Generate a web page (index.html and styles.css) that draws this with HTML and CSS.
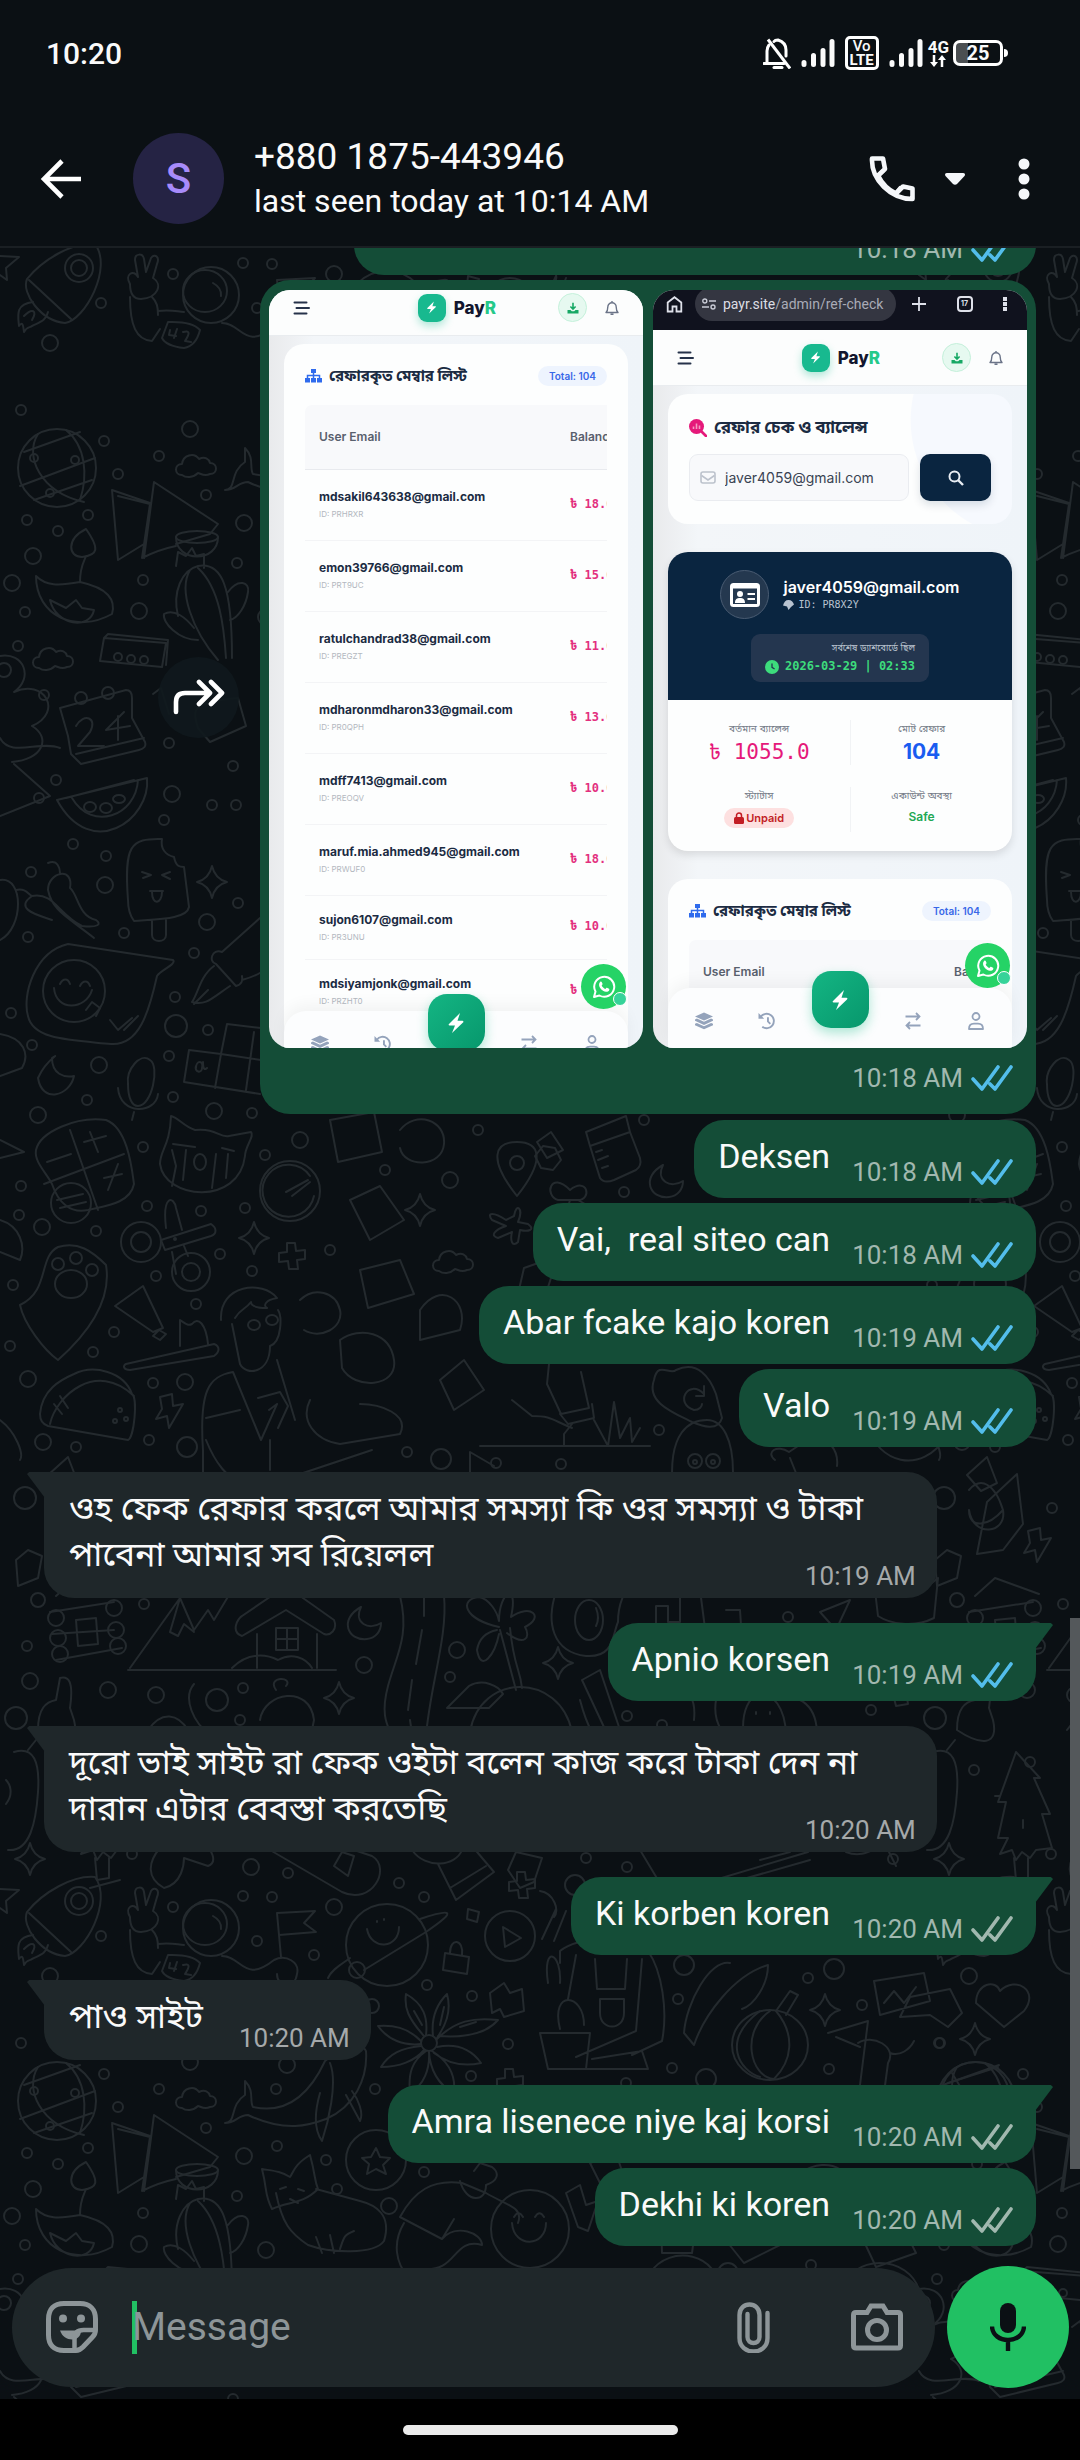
FILE: index.html
```html
<!DOCTYPE html>
<html lang="en">
<head>
  <meta charset="UTF-8">
  <meta name="viewport" content="width=device-width, initial-scale=1">
  <title>+880 1875-443946</title>
  <link rel="stylesheet" href="styles.css">
</head>
<body>

  <!-- shared icons -->
  <svg class="defs" aria-hidden="true">
    <symbol id="ticks" viewBox="0 0 42 28"><path d="M2 15l9 10L27 3M19 20l5 5L40 3" fill="none" stroke="currentColor" stroke-width="3.6" stroke-linecap="round" stroke-linejoin="round"/></symbol>
    <symbol id="bars" viewBox="0 0 34 28"><path d="M3 25.500v-2M12.500 25.500v-9M22 25.500v-14M31 25.500v-23" stroke="currentColor" stroke-width="5" stroke-linecap="round"/></symbol>
    <symbol id="bolt" viewBox="0 0 18 22"><path d="M13 1L2 12c-.7.700-.3 1.500.6 1.500H8l-3 7.500L16 10.500c.8-.8.4-1.700-.6-1.700H10.500z" fill="#fff"/></symbol>
    <symbol id="menu" viewBox="0 0 17 14"><path d="M1.500 1.500h12M3.500 7h12.500M1.500 12.500h12" stroke="#26324a" stroke-width="2" stroke-linecap="round"/></symbol>
    <symbol id="download" viewBox="0 0 12 12"><path d="M6 .8v6M3.400 4.500L6 7.200l2.600-2.700" fill="none" stroke="#16a864" stroke-width="1.600"/><path d="M.5 8h3l1.300 1.300h2.400L8.500 8h3v3.500H.5z" fill="#16a864"/></symbol>
    <symbol id="bell" viewBox="0 0 14 16"><path d="M7 1v1M1 12.500c1.600-1.500 1.800-3 1.800-5.500a4.200 4.200 0 0 1 8.400 0c0 2.500.2 4 1.800 5.500zM5.500 14.300h3" fill="none" stroke="#6b7488" stroke-width="1.400" stroke-linejoin="round"/></symbol>
    <symbol id="tree" viewBox="0 0 17 14"><path d="M6 0h5v4H6zM0 9h5v4.500H0zM6 9h5v4.500H6zM12 9h5v4.500h-5z" fill="#2f6bed"/><path d="M8.500 3v6M2.500 9V6.500h12V9" fill="none" stroke="#2f6bed" stroke-width="1.500"/></symbol>
    <symbol id="layers" viewBox="0 0 19 18"><path d="M9.500 0L19 4.200 9.500 8.500 0 4.200zM0 7.300l2-.9 7.500 3.400L17 6.400l2 .9v1.500l-9.500 4.300L0 8.800zM0 12l2-.9 7.500 3.400 7.500-3.400 2 .9v1.500l-9.500 4.300L0 13.500z" fill="#94a3bb"/></symbol>
    <symbol id="history" viewBox="0 0 19 18"><path d="M3 4.500A7.600 7.600 0 1 1 4.500 15M10.500 5v4.500l2.500 2.500" fill="none" stroke="#94a3bb" stroke-width="2"/><path d="M.5.500v6h6z" fill="#94a3bb"/></symbol>
    <symbol id="swap" viewBox="0 0 17 18"><path d="M1 4.500h14M11.500 1L15 4.500 11.500 8M16 13.500H2M5.500 10L2 13.500 5.500 17" fill="none" stroke="#94a3bb" stroke-width="1.800"/></symbol>
    <symbol id="user" viewBox="0 0 16 18"><circle cx="8" cy="4.500" r="3.500" fill="none" stroke="#94a3bb" stroke-width="1.800"/><path d="M1 17c0-3.500 2-5.300 5-5.300h4c3 0 5 1.800 5 5.300z" fill="none" stroke="#94a3bb" stroke-width="1.800" stroke-linejoin="round"/></symbol>
    <symbol id="whatsapp" viewBox="0 0 24 24"><path d="M2 22l1.500-5.400A10 10 0 1 1 7.400 20.500z" fill="none" stroke="#fff" stroke-width="2" stroke-linejoin="round"/><path d="M8.300 6.800c.5-.5 1.100-.4 1.400.2l.8 1.800c.2.400 0 .8-.8 1.700.8 1.700 2 2.800 3.700 3.500.9-1.100 1.100-1.400 1.600-1.200l2 1c.5.200.4.900.1 1.600-.5 1-2 1.500-3.200 1.300-3.400-.7-6.300-3.500-6.800-6.300-.2-1.400.4-2.800 1.200-3.600z" fill="#fff"/></symbol>
  </svg>

  <header class="top">
    <div class="status">
      <span class="clock">10:20</span>
      <div class="status-icons">
        <svg class="mute" viewBox="0 0 28 31"><path d="M1 25.500h20M4 25V13c0-2 .5-4 2-6M11 3.500c1-1.500 2-1.500 4-1.500 5 1.500 8 5 8 10v6" fill="none" stroke="#fff" stroke-width="3" stroke-linecap="round"/><path d="M5 1.500l22 29" stroke="#fff" stroke-width="3"/><path d="M11 29.500h8" stroke="#fff" stroke-width="3" stroke-linecap="round"/></svg>
        <svg class="bars"><use href="#bars"/></svg>
        <span class="volte"><span class="vo">Vo</span><span>LTE</span></span>
        <svg class="bars"><use href="#bars"/></svg>
        <span class="net">4G
          <svg viewBox="0 0 16 12"><path d="M4 0v9M12 12V3" stroke="#fff" stroke-width="2.500"/><path d="M0 7h8l-4 5zM8 5h8l-4-5z" fill="#fff"/></svg>
        </span>
        <span class="battery">25</span>
      </div>
    </div>
    <div class="contact">
      <button class="icon-btn back" aria-label="Back"><svg viewBox="0 0 42 40"><path d="M22 2L4 20l18 18M4 20h37" fill="none" stroke="#fff" stroke-width="4.600"/></svg></button>
      <span class="avatar">S</span>
      <div class="who">
        <h1>+880 1875-443946</h1>
        <p>last seen today at 10:14 AM</p>
      </div>
      <button class="icon-btn call" aria-label="Call">
        <svg class="phone" viewBox="0 0 46 46"><path d="M3 2.500h11l2 10.500-7 6.500c4.500 9 9.500 14 18 18l7-7 9.500 2V43C22 43 2 24 3 2.500z" fill="none" stroke="#f5f7fa" stroke-width="4.600" stroke-linejoin="round"/><path d="M9 20l6-6M27 37l5-6" stroke="#f5f7fa" stroke-width="4"/></svg>
        <svg class="caret" viewBox="0 0 22 14"><path d="M3 1h16c2 0 2.500 1.500 1.500 3l-7.500 8c-1 1-3 1-4 0L1.500 4C.5 2.500 1 1 3 1z" fill="#f5f7fa"/></svg>
      </button>
      <button class="icon-btn more" aria-label="More options"><svg viewBox="0 0 12 42"><circle cx="6" cy="6" r="5.500" fill="#f5f7fa"/><circle cx="6" cy="21" r="5.500" fill="#f5f7fa"/><circle cx="6" cy="36" r="5.500" fill="#f5f7fa"/></svg></button>
    </div>
  </header>

  <div class="screen">

    <!-- doodle wallpaper, one 919x1633 tile repeated -->
    <svg class="wallpaper" aria-hidden="true">
      <defs>
        <path id="spark" d="M0-16Q3-3 15 0 3 3 0 16-3 3-15 0-3-3 0-16z"/>
        <path id="cloud" d="M-13 9c-8 0-8-11 0-11 1-9 12-12 17-5 6-3 10 0 11 4 8 0 8 11 0 11-6 3-10-1-12-1-5 5-12 5-16 2z"/>
        <path id="moon" d="M-4-16c-22 12-14 34 6 32 9-1 14-8 14-16C4 8-12 0-4-16z"/>
        <path id="cross" d="M-5-14h8l1 8 9-1v9l-8 1 1 9h-9l-1-8-9 1v-9l8-1z"/>
        <path id="zap" d="M-9-13l12-3 1 12 10-2L0 18-2 6l-11 3 6-10z"/>
        <g id="tile">
          <!-- space -->
          <path d="M95 244c-22-2-52 15-68 35-6 14 14 42 38 44 20-3 48-55 30-79zM29 280l42 39"/><circle cx="79" cy="268" r="14"/><circle cx="79" cy="268" r="8"/>
          <path d="M33 302c-18 2-15 14-14 24 3-4 4-3 5 6 3-6 6-4 8-6 8-4 14-5 16-14M24 316c8-8 14-6 8 4"/>
          <path d="M130 284c-6-10 4-15 8-7l-3-17c0-7 8-7 9-1l2 13 5-14c4-5 9-1 6 6l-4 14c10 6 5 20-12 21-7 0-11-4-11-15zM130 297c0 28 6 43 22 44l8-12M152 297c5 5 6 10 6 18M158 311c14-2 20 1 26 1"/>
          <circle cx="211" cy="295" r="28"/><ellipse cx="205" cy="291" rx="22" ry="21"/><path d="M213 283q9 5 8 13"/>
          <path d="M168 322q24-1 32 8-4 16-16 18-18-2-22-10zM170 330l-1 5 7 1M177 329l-3 9M183 332q10-3 2 9l6 1M222 323c20 0 22 28 52 4 12-6 26 2 23 14-2 16-20 14-20 0"/>
          <path d="M277 280l38-2-11 12 12 9-37 3M277 280l4 44"/>
          <circle cx="387" cy="312" r="41"/><path d="M420 286c30-10 40-10 6 13L364 337M328 345c4-9 14-14 22-20"/><circle cx="357" cy="337" r="8"/><path d="M367 296c4 22 32 20 32-2M377 288v1M384 286v1"/>
          <path d="M445 320l24 4-2 17-24-4zM450 320c0-16 14-14 12 2"/><circle cx="510" cy="303" r="25"/><path d="M503 294l2 20 16-9zM468 276l11 3-2 10-10-3z"/>
          <path d="M0 256l19 1-13 11 1 12-7-5M540 258c14 2 20 20 14 26M556 276l-14 30M566 278l-12 30"/>
          <!-- plants and animals -->
          <circle cx="429" cy="410" r="8"/><path d="M424 403c-16-18-20-28-18-42 18 10 22 24 20 41M433 403c-2-18 4-32 14-42 5 18-2 32-10 44M437 406c18-18 36-22 61-19-12 14-34 18-60 16M437 414c20-4 34 2 44 16-18 4-34 0-47-10M432 418c16 10 24 24 22 42-16-8-24-24-25-41M426 418c-14 10-18 22-16 42 14-8 20-24 19-41M421 413c-20 2-32 8-40 21 18 0 34-6 43-17M421 408c-14-14-28-16-43-15 10 14 26 20 43 18M414 378l8 14M444 374l-4 18M460 394l16-5"/>
          <circle cx="57" cy="468" r="39"/><path d="M24 452l56-20M20 486l75-28M34 500l58-20M38 434c-14 22 2 58 46 68M66 430c20 16 22 46 14 70"/><circle cx="34" cy="458" r="4"/><circle cx="75" cy="460" r="4"/><circle cx="50" cy="493" r="4"/>
          <use href="#cloud" x="195" y="466"/>
          <path d="M225 490c12 0 4-18 20-28v-14c10 10 4 20 8 26 36 8 58-16 72-46 14-12 38-18 41-10 2 28-12 56-40 68-16 6-40 14-78-4-10 0-12 8-23 8zM330 430c8 20-2 60-8 78-10-14-6-34-2-48M346 462l14 26c4-8-2-22-8-30"/>
          <path d="M112 490l38 13M112 490l6 70 26-16M118 496l32 8-8 54c12-6 24-10 34-12M154 482l64 42-8 10-34 10M154 482l-10 76"/><ellipse cx="197" cy="537" rx="21" ry="6"/><path d="M176 537c0 26 42 26 42 0"/>
          <circle cx="376" cy="527" r="30"/><path d="M376 515l4 9 10 1-7 7 3 9-10-5-9 5 2-10-7-6 9-1z"/>
          <path d="M262 536c6 24 2 24 10 40 16-8 30-4 46-20-4-10-2-12-8-34-16 10-16 16-20 22-10-6-16-6-28-8zM276 560c6 30 14 40 32 52 22 8 66 10 76-4 8-26-8-36-24-40l-44-12M316 604l6 16M330 602l4 18M340 616c4-12 4-14 14-18M280 556l6-2M298 556l6 2M290 566l8 4"/>
          <path d="M36 576c0 40 40 58 76 38 4-14-4-26-32-32-22 4-34 4-44-6zM82 557c-14 0-16-18 4-28 14 20 12 26-4 28zM80 582c0-16 4-20 6-26M50 600c6 26 40 30 44 10l-12-2-6-8-10 8z"/>
          <path d="M178 616c-6-24 4-46 20-50 24-4 34 20 34 92M190 570c-12 20 2 60 28 90M198 568c22 20 26 60 28 90M176 566l2-14 8 4 6-8 4 8 8-2v14M228 592c10-14 22-10 20 0-2 14-10 26-18 28M198 640c-20 0-36-18-34-26 10-6 22 4 30 14"/>
          <path d="M400 584c14-26 32-38 62-34l24 10c20 12 38 14 32 30M400 584l42 22 12-20M404 590c-12 20-8 40 4 54M442 606c14-16 40-6 40 6-30-8-24 28-60 24"/><circle cx="530" cy="596" r="39"/><path d="M512 590c2 26 34 24 34 0M514 584c3-5 6-5 9 0M535 584c3-5 6-5 9 0M460 548c6 22 26 22 26 4 12-4 14-12 6-18l-12-4-6 8"/>
          <path d="M104 638l62 5-4 24-62-6zM104 638l4-4 60 6-2 25"/><circle cx="118" cy="657" r="4"/><circle cx="131" cy="659" r="4"/><circle cx="144" cy="660" r="4"/><use href="#cloud" x="52" y="659"/>
          <path d="M153 694l8-6 8 26M198 728c-6-20-6-26 40-30l8 28-36 16z"/>
          <path d="M60 708l66-18q6 0 6 8v20l13 24q2 6-6 8l-58 14-10-10-3-18zM76 754l68-16"/><circle cx="81" cy="698" r="6"/><circle cx="108" cy="693" r="6"/><path d="M76 726c8-14 22-8 14 6l-12 14h26M124 712l-18 18 24-4M118 716v24"/>
          <path d="M57 800l90-22c4 42-56 84-90 22zM66 798l68-18M138 780c-2 36-46 52-66 18"/><ellipse cx="90" cy="807" rx="6" ry="5"/><ellipse cx="106" cy="808" rx="6" ry="5"/><ellipse cx="119" cy="799" rx="6" ry="4"/>
          <path d="M128 900c-4-54 2-62 34-61-2 10 4 16 12 18 2 10 6 10 10 10l5 40c-2 12-30 12-55 14q-6-8-6-21zM152 921v14c0 8 14 8 14 0v-15M142 872l9 3-8 3M170 872l-8 3 8 4M150 891h13M152 892c0 14 10 12 10 0"/>
          <path d="M16 890c10-2 12 4 16 6 22-4 26 18 50 30 16 2 20-2 14-6-18-4-18-26-26-32 4-22-22-16-22 2 4 20 18 26 46 48M48 863c10-4 12 6 12 10M32 896c-20 14 10 20 20 24"/>
          <use href="#spark" x="212" y="882"/>
          <path d="M28 1016c-6-20 6-64 40-72l105 16c4 4-12 10-16 16-8 36-18 70-46 68-40-4-78-4-83-28z"/><ellipse cx="74" cy="991" rx="31" ry="31"/><path d="M54 988c2 24 32 22 38 2M60 984c3-6 8-6 10 0M80 986c3-6 8-6 10 0M86 1010l6-8 8 6-4 8M110 1020l8 10 14-12M124 1030l14-14"/>
          <path d="M222 952l38-34c14-4 20 20 14 40-8 14-18 18-32 22M222 952c-10-4-14 10-6 12l20 22c8-2 6-8 6-10M214 966c-14 10-16 28-22 36 14 4 20-4 38-16M194 1004l14-14"/>
          <path d="M38 1078c8-18 24-26 14-20 0 16 12 20 22 18-4 20-32 28-36 2zM128 1084c-2-14 12-32 22-24 10 6 2 46-12 46-6 0-10-8-10-22zM118 1088c2 28 38 26 40 6M134 1112l-2 8"/>
          <path d="M184 1082l5-32 32 4 6-30 34 4M221 1054l-6 34M184 1082l76 12M221 1054l40 6M254 1032l-8 58M196 1068c0-8 8-8 6 0 0 6-8 4-6-2M203 1062c0 8 2 8 4 6"/>
          <path d="M36 1150c4-18 40-34 70-30 22 8 26 50 28 64-4 20-30 22-46 26-18 4-30-8-36-26-6-12-18-22-16-34zM70 1130l28 80M44 1184l80-30M47 1162l24-8M84 1142l22-6M90 1132l8 20M104 1178l18-4M108 1190l10-26"/><ellipse cx="71" cy="1203" rx="20" ry="20"/><path d="M57 1200l26-6M60 1208l26-6"/>
          <path d="M160 1164c0-14 10-18 11-48 8 2 12 10 24 14 22-2 24 8 34 6l22-4c4 4-6 14-6 24-6 50-80 44-85 8zM173 1144l22 3M172 1150l4 16-4 20M186 1150l-3 30M222 1148l12 3M216 1154l-4 34M228 1154l-2 24"/><ellipse cx="200" cy="1162" rx="6" ry="8"/>
          <circle cx="141" cy="1242" r="20"/><circle cx="141" cy="1242" r="10"/><circle cx="191" cy="1272" r="19"/><circle cx="191" cy="1272" r="9"/><path d="M161 1240l50-16c6 4 6 10 0 12l-46 14zM166 1228c-4-34 8-32 10-20l6 22M172 1252l4 22M184 1246l4 10"/><circle cx="175" cy="1239" r="1"/>
          <path d="M20 1305c30-14 18-48 38-58 20-6 34 4 48 18 6 36-20 70-48 95-14-10-34-36-38-55z"/><ellipse cx="71" cy="1284" rx="16" ry="14"/><circle cx="58" cy="1264" r="6"/><circle cx="76" cy="1258" r="6"/><circle cx="92" cy="1270" r="6"/>
          <path d="M115 1306l28-20 20 42-10 4zM153 1336l6-6 7 4-6 6zM126 1364l88-20c6 2 6 8 0 12l-84 14c-6 0-8-4-4-6zM180 1346v-26c6 4 8 6 12 4 6-8 14 0 16 20"/>
          <path d="M221 1320c-2-36 42-40 56-22-12 2-14 8-10 10-10 0-16-2-16-6-6 8-10 6-16 16M232 1324l8 40c6 12 30 10 30-18 12-4 12-30 8-36"/><ellipse cx="254" cy="1325" rx="6" ry="5"/><ellipse cx="272" cy="1320" rx="6" ry="5"/><path d="M203 1450c-4-60 6-74 30-78l28 68 16-36-8 6M206 1418l34-8M277 1360l18 60M203 1450v30M270 1440v30M258 1398l22-6 8 14-10 22"/>
          <path d="M40 1414c2-24 20-34 34-40 20-10 50-2 58 20 6 4 2 44-4 46l-80-14c-6-2-8-6-8-12zM50 1424c6-28 46-64 84-28M54 1404l8 10M60 1396l8 12"/><use href="#zap" x="169" y="1410"/><circle cx="120" cy="1410" r="2"/><circle cx="126" cy="1419" r="2"/><circle cx="115" cy="1421" r="2"/>
          <circle cx="290" cy="1191" r="30"/><path d="M310 1176a26 26 0 1 0 4 20M286 1192l22-12M292 1196l18-14"/><use href="#spark" x="254" y="1238"/><use href="#cross" x="292" y="1257"/>
          <!-- middle, around the short messages -->
          <path d="M330 1120l44-8 8 40-44 10zM400 1130c16-20 46-10 44 14s-40 24-44 4M300 1300c14-14 36-8 40 10s-20 30-36 20M350 1200l30-14 24 34-34 20z"/><use href="#spark" x="420" y="1210"/><use href="#cloud" x="452" y="1262"/>
          <path d="M517 1196c-30-38-22-54 0-54s30 16 0 54z"/><circle cx="517" cy="1163" r="7"/>
          <path d="M586 1132l40-16 4 16-40 14zM590 1146l10 32q4 6 14 2l22-10q6-4 4-12l-10-26M596 1152l6-2M598 1160l10-4M602 1168l6-2"/>
          <use href="#moon" x="667" y="1181"/><path d="M563 1150l-12-18-14 10 10 16zM535 1156l8-10 12 2 6 12-8 10-12-2z"/>
          <path d="M570 1190c-20-20-26 6-12 10h20c14 0 10-24-8-10zM570 1200l-4 14M578 1200l14 8v18"/>
          <path d="M514 1216c2-14 10-8 4 6l10 2c8 6 0 8-8 6l-2 12c-6 6-8-2-6-10l-14 6c-8-2-4-8 8-12l-14-6c-6-8 2-8 14 0z"/>
          <path d="M524 1268l-6 26 24 12 16-50zM360 1270l40-10 14 34-46 14zM420 1310c20-30 50-10 40 20l-40 10zM340 1340c20-14 50-8 54 20s-40 30-52 8zM310 1400c-10 20 4 40 30 44l60-10c10-20-20-30-40-30M440 1380l24-20 20 30-30 20z"/>
          <path d="M654 1380c4-20 16-4 22-10 22-10 34 8 40 24l6 24c-4 14-20 8-30 4-20-10-46-20-38-42z"/><path d="M704 1394c-16-16-30 10-10 16 6 0 8-4 8-6M704 1386v10h-8"/>
          <path d="M549 1364l-2 20 14 30 28-6-8-36M560 1414l8 10 26-6-2-14M572 1424l-8 10v12M594 1420l14 26 6-44 6 36 10-20 2 24 8-14M480 1446h170M512 1400l20 16c20 0 20 4 40 12"/>
          <path d="M673 1490c-6-60 18-70 34-70s26 20 26 52"/><circle cx="695" cy="1461" r="7"/><circle cx="713" cy="1461" r="7"/><circle cx="695" cy="1462" r="2"/><circle cx="713" cy="1462" r="2"/>
          <path d="M775 1460c-10-8 2-16 14-8l24-16c14 0 26 14 24 30M790 1458l8 20M870 1430c6 28 50 50 78 4M206 1440c8 20 20 40 46 50l120-40"/><path d="M470 1472v-20l24 14"/>
          <!-- village strip -->
          <path d="M48 1475l20-18 10 26-16 8zM68 1502l30-28 6 50-20 26-26 4zM50 1490c12-14 26-6 34 20M50 1510c0 20 20 16 34 0 4 24-30 28-34 0z"/><use href="#zap" x="118" y="1544"/><path d="M16 1560l12-10 14 6-4 22-20 8z"/>
          <path d="M50 1612l64-10M52 1634l62-4M56 1660l66-12M76 1620l20-2 2 26-20 2zM56 1596l20-18 44 16"/><circle cx="56" cy="1618" r="8"/><circle cx="58" cy="1638" r="8"/><circle cx="60" cy="1654" r="8"/><circle cx="114" cy="1608" r="8"/><circle cx="116" cy="1630" r="8"/><circle cx="118" cy="1646" r="8"/>
          <path d="M128 1670h208M130 1668l50-70 14 32 14-20 6 10 24-40M180 1598l-10 34 8 4 6-12 10 8"/><path d="M286 1610l-44 26c-12-4-4-18 0-20l44-30 48 34c4 10-4 16-10 14zM257 1634v34M317 1634v34M276 1628h22v22h-22zM287 1628v22M276 1639h22M232 1668c16-16 34-14 46-8 14-8 28-2 34 8"/>
          <use href="#moon" x="365" y="1623"/><path d="M400 1596c10 40-4 60-12 90s0 40 4 50M444 1596c4 40-14 90-18 140M424 1596v20M422 1630l-6 34M412 1680l-4 30M410 1720l2 14"/>
          <path d="M499 1627c-36-8-40-28-20-30 10 2 18 14 20 24 0-30 20-40 12-4 20-14 34 0 14 10 6 10 0 20-18 6M499 1634c-4 20-18 40-22 16 2-12 10-18 20-20M500 1630l16 60M510 1628c4 40 10 40 12 60"/>
          <path d="M470 1732c10-60 90-60 102 0zM447 1708l22-22c14-8 30 0 34 8l-14 14z"/><use href="#spark" x="558" y="1663"/><use href="#spark" x="339" y="1698"/>
          <ellipse cx="589" cy="1620" rx="14" ry="20"/><path d="M556 1592c-10 30-4 60 30 64 28 2 26-20 32-34 0-20 6-24 6-30M596 1608q4 10 0 18"/>
          <path d="M656 1640v-34h12v16h12v-26M700 1590l6 46M726 1610h14l2 30M820 1612l30-12-14 30zM874 1582c20 12 50 10 64-4l-4 40c-20 10-44 6-56-2z"/>
          <path d="M260 1720c4-28 50-36 54 0l-4 20M276 1690c-10-14 18-14 10-4M194 1684c-12 14 0 40 16 50M60 1678c8-2 14 2 10 30l4 12c6 26-12 26-36 10 0-22 8-28 18-30zM148 1730c14-20 30-16 40 0"/><circle cx="217" cy="1700" r="11"/>
          <path d="M582 1680l18-10 20 60-10 10zM580 1700c8 30 16 40 22 40M680 1700c8-14 16 0 14 20M744 1740c-8-60 40-60 42-6M756 1712v2M770 1712v2M716 1700c-4 24 10 40 22 44M800 1700c20 10 20 40 12 60M892 1690l12-10 4 24-12 2z"/>
          <!-- night forest, under the second reply -->
          <path d="M97 1752l-18 50h8l-8 36h10l-8 16 12-4 4 10 6-8 8 6 6-8 16-2-10-34h8l-16-36h6zM95 1858l2 22 12-2v-20M76 1796h4M104 1820v8"/><path d="M14 1752c20-6 26 10 24 40s-8 60-30 58M6 1780c4 4 8 14 0 24M28 1750l8-10"/><use href="#spark" x="30" y="1859"/>
          <path d="M160 1848c-12 14-14 30 4 40 18-4 20-24 20-30l24 8c10-4 4-18-6-22M270 1850l72 42c30 14 50-24 30-36l-30-10M334 1866l8-14 12 4-6 20zM412 1850c14 20 44 16 50 0M438 1864l18 36 38-28-22-26M450 1888l36-22M508 1870l8-18 26 6-8 24-14 6zM640 1850l30 50 140-40M680 1880l8 8 120-36 8-18"/><use href="#cross" x="522" y="1886"/>
          <path d="M760 1860l30-8M846 1852c20 8 30-8 40-6l10 20"/>
          <!-- upper right of the tile -->
          <path d="M560 330v-12c20-16 70-14 88 0 14 20 20 60 14 90l-30 14M576 322l-8 44M642 326l-6 72-60 26M595 326l2 30h28l2-30M600 366v14c0 18 24 18 24 0v-14zM540 400h50l-4 36h-38zM548 436h100l-6-18-50 8M560 396c-10-40 24-36 24-4M548 350c-6-40 14-30 12 0"/>
          <path d="M730 330c-20-4-44 40-46 70l10 12c10-30 40-70 74-80 0 20-14 40-26 44"/><ellipse cx="770" cy="412" rx="38" ry="35"/><path d="M770 378c-30 20-20 66 4 68M776 378c20 24 16 50-2 68M760 378c-40 30-20 60 0 66M776 378l14-20 8 4-12 20"/>
          <use href="#spark" x="825" y="377"/><path d="M874 348l50-8 6 28-50 14zM884 370l10-12 10 12 12-16M900 384l10-20 40-8 12 24-14 14-18-12zM976 370c0-20 20-24 24-12 16-16 40 0 24 20l-20 16z"/>
          <path d="M828 400l40-12-10 80M858 410c14-10 40 4 30 20l-8 60M836 404l24 10M890 420c10 4 20-4 24-12"/><use href="#spark" x="975" y="406"/>
          <circle cx="975" cy="463" r="34"/><path d="M948 450l50-16M944 474l60-18M952 440l30 50"/><use href="#cross" x="510" y="450"/><path d="M490 360l14-10 6 10 12-4 2 22-20 6-4-8-8 4z"/>
          <path d="M566 560l14-8 6 20 12-4-10 30-10-4zM590 530l26-10 10 30-20 12zM660 560h40l-8 60h-30zM720 600l40-30 24 40-40 20zM800 540c30-20 60 0 50 30s-60 20-50-30zM860 600l36-20 20 40-40 14zM700 480l40-16 14 44-36 8zM650 640c20-30 70-20 70 20M740 650c14-20 50-10 60 14M840 660c10-40 70-40 80 0M120 1880l-30 8"/>
          <path d="M60 748c-20-8-50 10-60-10M0 656c24-4 34 22 14 36 30-14 50 20 18 34 20 12 10 34-20 36M0 816l50-20-36-32M0 880c24-4 24 48 0 60M0 1034c24 4 30 20 22 34L0 1076M0 1140l24 12-24 6M0 1220c20 6 26 26 20 40L0 1252M0 1420c16 12 24 34 20 40"/>
        </g>
        <!-- loose bubbles between the drawings -->
        <g id="dots">
          <circle cx="101" cy="303" r="5"/><circle cx="173" cy="274" r="5"/><circle cx="243" cy="263" r="5"/><circle cx="272" cy="264" r="5"/><circle cx="334" cy="274" r="8"/><circle cx="257" cy="308" r="5"/><circle cx="314" cy="322" r="5"/><circle cx="50" cy="343" r="8"/><circle cx="424" cy="264" r="5"/><circle cx="399" cy="250" r="5"/><circle cx="427" cy="352" r="5"/><circle cx="472" cy="363" r="5"/><circle cx="508" cy="411" r="5"/><circle cx="21" cy="410" r="5"/><circle cx="372" cy="373" r="7"/><circle cx="104" cy="441" r="5"/><circle cx="159" cy="456" r="5"/><circle cx="118" cy="474" r="5"/><circle cx="206" cy="495" r="5"/><circle cx="276" cy="456" r="5"/><circle cx="287" cy="432" r="8"/><circle cx="190" cy="429" r="8"/><circle cx="375" cy="456" r="5"/><circle cx="471" cy="443" r="5"/><circle cx="88" cy="515" r="5"/><circle cx="27" cy="520" r="5"/><circle cx="58" cy="531" r="5"/><circle cx="33" cy="556" r="8"/><circle cx="12" cy="583" r="8"/><circle cx="244" cy="523" r="8"/><circle cx="277" cy="513" r="5"/><circle cx="326" cy="527" r="5"/><circle cx="337" cy="556" r="5"/><circle cx="389" cy="573" r="8"/><circle cx="424" cy="539" r="5"/><circle cx="237" cy="563" r="5"/><circle cx="143" cy="580" r="5"/><circle cx="139" cy="611" r="8"/><circle cx="25" cy="612" r="5"/><circle cx="266" cy="617" r="8"/><circle cx="18" cy="646" r="5"/><circle cx="4" cy="670" r="7"/><circle cx="44" cy="695" r="5"/><circle cx="169" cy="743" r="5"/><circle cx="56" cy="780" r="5"/><circle cx="39" cy="798" r="5"/><circle cx="172" cy="794" r="8"/><circle cx="212" cy="805" r="5"/><circle cx="236" cy="805" r="5"/><circle cx="233" cy="766" r="5"/><circle cx="164" cy="820" r="5"/><circle cx="73" cy="844" r="5"/><circle cx="106" cy="856" r="5"/><circle cx="105" cy="885" r="8"/><circle cx="31" cy="872" r="5"/><circle cx="238" cy="903" r="5"/><circle cx="207" cy="922" r="8"/><circle cx="124" cy="933" r="5"/><circle cx="28" cy="937" r="5"/><circle cx="194" cy="953" r="5"/><circle cx="175" cy="997" r="5"/><circle cx="176" cy="1026" r="11"/><circle cx="208" cy="1030" r="5"/><circle cx="11" cy="1013" r="5"/><circle cx="32" cy="1045" r="5"/><circle cx="99" cy="1065" r="8"/><circle cx="169" cy="1056" r="5"/><circle cx="173" cy="1097" r="5"/><circle cx="87" cy="1100" r="5"/><circle cx="38" cy="1115" r="8"/><circle cx="214" cy="1111" r="8"/><circle cx="252" cy="1113" r="5"/><circle cx="143" cy="1147" r="5"/><circle cx="265" cy="1155" r="5"/><circle cx="21" cy="1186" r="5"/><circle cx="19" cy="1215" r="5"/><circle cx="42" cy="1227" r="8"/><circle cx="96" cy="1231" r="5"/><circle cx="147" cy="1206" r="5"/><circle cx="201" cy="1211" r="5"/><circle cx="245" cy="1208" r="5"/><circle cx="220" cy="1254" r="5"/><circle cx="156" cy="1276" r="5"/><circle cx="252" cy="1271" r="5"/><circle cx="13" cy="1285" r="5"/><circle cx="196" cy="1304" r="5"/><circle cx="114" cy="1332" r="5"/><circle cx="93" cy="1352" r="5"/><circle cx="10" cy="1346" r="5"/><circle cx="28" cy="1379" r="8"/><circle cx="153" cy="1383" r="5"/><circle cx="185" cy="1382" r="8"/><circle cx="43" cy="1442" r="8"/><circle cx="76" cy="1447" r="5"/><circle cx="149" cy="1440" r="5"/><circle cx="187" cy="1447" r="10"/>
          <circle cx="330" cy="1250" r="5"/><circle cx="385" cy="1170" r="5"/><circle cx="450" cy="1180" r="8"/><circle cx="478" cy="1130" r="5"/><circle cx="300" cy="1140" r="8"/><circle cx="644" cy="1120" r="5"/><circle cx="624" cy="1192" r="5"/><circle cx="659" cy="1430" r="5"/><circle cx="496" cy="1463" r="5"/><circle cx="561" cy="1464" r="5"/><circle cx="407" cy="1452" r="5"/><circle cx="441" cy="1459" r="10"/><circle cx="25" cy="1498" r="11"/><circle cx="133" cy="1508" r="5"/><circle cx="38" cy="1600" r="7"/><circle cx="144" cy="1604" r="5"/><circle cx="364" cy="1665" r="8"/><circle cx="457" cy="1650" r="8"/><circle cx="450" cy="1677" r="5"/><circle cx="27" cy="1646" r="5"/><circle cx="30" cy="1681" r="8"/><circle cx="108" cy="1690" r="8"/><circle cx="156" cy="1695" r="8"/><circle cx="243" cy="1688" r="5"/><circle cx="240" cy="1720" r="5"/><circle cx="16" cy="1718" r="11"/><circle cx="788" cy="1617" r="5"/><circle cx="627" cy="1716" r="5"/><circle cx="662" cy="1725" r="5"/><circle cx="871" cy="1710" r="5"/><circle cx="55" cy="1770" r="5"/><circle cx="111" cy="1762" r="5"/><circle cx="132" cy="1854" r="5"/><circle cx="251" cy="1867" r="8"/><circle cx="288" cy="1873" r="5"/><circle cx="586" cy="1858" r="5"/><circle cx="627" cy="1867" r="5"/><circle cx="893" cy="1859" r="5"/>
          <circle cx="575" cy="252" r="10"/><circle cx="684" cy="332" r="10"/><circle cx="678" cy="366" r="5"/><circle cx="808" cy="345" r="5"/><circle cx="834" cy="336" r="10"/><circle cx="862" cy="372" r="5"/><circle cx="672" cy="435" r="5"/><circle cx="706" cy="446" r="10"/><circle cx="829" cy="436" r="5"/><circle cx="939" cy="410" r="5"/><circle cx="626" cy="450" r="5"/><circle cx="728" cy="640" r="10"/><circle cx="811" cy="632" r="5"/><circle cx="560" cy="660" r="9"/><circle cx="640" cy="650" r="5"/>
        </g>
      </defs>
      <g class="ink" transform="translate(0 -248)">
        <use href="#tile"/><use href="#dots"/>
        <use href="#tile" x="919"/><use href="#dots" x="919"/>
        <use href="#tile" y="1633"/><use href="#dots" y="1633"/>
        <use href="#tile" x="919" y="1633"/><use href="#dots" x="919" y="1633"/>
      </g>
    </svg>

    <main class="chat">
      <div class="bubble out wide">
        <span class="meta">10:18 AM <svg class="ticks read"><use href="#ticks"/></svg></span>
      </div>

      <div class="media-row">
        <button class="forward" aria-label="Forward"><svg viewBox="0 0 52 36"><path d="M3 33V23q0-9 9-9h24M26 3l11 11-11 11M38 3l11 11-11 11" fill="none" stroke="#fff" stroke-width="4.600" stroke-linecap="round" stroke-linejoin="round"/></svg></button>
        <div class="bubble media">
          <div class="shots">

            <section class="shot shot-list">
              <div class="app-bar scrolled">
                <svg class="i-menu"><use href="#menu"/></svg>
                <span class="logo"><svg><use href="#bolt"/></svg></span>
                <b class="brand">Pay<i>R</i></b>
                <span class="dl"><svg><use href="#download"/></svg></span>
                <svg class="i-bell"><use href="#bell"/></svg>
              </div>
              <div class="card list">
                <div class="card-head">
                  <svg class="i-tree"><use href="#tree"/></svg>
                  <h2 lang="bn">রেফারকৃত মেম্বার লিস্ট</h2>
                  <span class="total">Total: 104</span>
                </div>
                <div class="table-box">
                  <table>
                    <thead><tr><th>User Email</th><th>Balance</th></tr></thead>
                    <tbody>
                      <tr><td><b>mdsakil643638@gmail.com</b><small>ID: PRHRXR</small></td><td class="taka">৳ 18.0</td></tr>
                      <tr><td><b>emon39766@gmail.com</b><small>ID: PRT9UC</small></td><td class="taka">৳ 15.0</td></tr>
                      <tr><td><b>ratulchandrad38@gmail.com</b><small>ID: PREGZT</small></td><td class="taka">৳ 11.0</td></tr>
                      <tr><td><b>mdharonmdharon33@gmail.com</b><small>ID: PR0QPH</small></td><td class="taka">৳ 13.0</td></tr>
                      <tr><td><b>mdff7413@gmail.com</b><small>ID: PREOQV</small></td><td class="taka">৳ 10.0</td></tr>
                      <tr><td><b>maruf.mia.ahmed945@gmail.com</b><small>ID: PRWUF0</small></td><td class="taka">৳ 18.0</td></tr>
                      <tr class="short"><td><b>sujon6107@gmail.com</b><small>ID: PR3UNU</small></td><td class="taka">৳ 10.0</td></tr>
                      <tr class="short"><td><b>mdsiyamjonk@gmail.com</b><small>ID: PRZHT0</small></td><td class="taka">৳</td></tr>
                    </tbody>
                  </table>
                </div>
              </div>
              <span class="wa"><svg><use href="#whatsapp"/></svg></span>
              <div class="tabs">
                <svg><use href="#layers"/></svg><svg><use href="#history"/></svg>
                <span class="fab"><svg><use href="#bolt"/></svg></span>
                <svg><use href="#swap"/></svg><svg><use href="#user"/></svg>
              </div>
            </section>

            <section class="shot shot-check">
              <div class="browser">
                <svg class="i-home" viewBox="0 0 16 17"><path d="M1.200 6.500L8 1.200l6.800 5.300v9H10v-5H6v5H1.200z" fill="none" stroke="#dfe1ea" stroke-width="1.800"/></svg>
                <span class="url">
                  <svg viewBox="0 0 14 12"><path d="M7 3h7M0 9h7" stroke="#c9cbd6" stroke-width="1.600"/><circle cx="2.800" cy="3" r="2" fill="none" stroke="#c9cbd6" stroke-width="1.400"/><circle cx="11" cy="9" r="2" fill="none" stroke="#c9cbd6" stroke-width="1.400"/></svg>
                  payr.site<em>/admin/ref-check</em>
                </span>
                <svg class="i-plus" viewBox="0 0 14 14"><path d="M7 0v14M0 7h14" stroke="#dfe1ea" stroke-width="1.800"/></svg>
                <span class="tab-count">17</span>
                <svg class="i-dots" viewBox="0 0 4 14"><path d="M0 0h4v4H0zM0 5h4v4H0zM0 10h4v4H0z" fill="#dfe1ea"/></svg>
              </div>
              <div class="app-bar">
                <svg class="i-menu"><use href="#menu"/></svg>
                <span class="logo"><svg><use href="#bolt"/></svg></span>
                <b class="brand">Pay<i>R</i></b>
                <span class="dl"><svg><use href="#download"/></svg></span>
                <svg class="i-bell"><use href="#bell"/></svg>
              </div>
              <div class="card search">
                <label class="search-title" for="ref" lang="bn">
                  <svg viewBox="0 0 18 18"><circle cx="7.500" cy="7.500" r="7.500" fill="#e5197a"/><path d="M12 12l5 5" stroke="#e5197a" stroke-width="2.600" stroke-linecap="round"/><path d="M4.500 10V7.500M7.500 10V4.500M10.500 10V6.500" stroke="#f59ac4" stroke-width="1.600"/></svg>
                  রেফার চেক ও ব্যালেন্স
                </label>
                <div class="search-row">
                  <span class="field">
                    <svg viewBox="0 0 16 13"><rect x="1" y="1" width="14" height="11" rx="2" fill="none" stroke="#bcc2cc" stroke-width="1.600"/><path d="M1.500 4.500L8 9l6.500-4.500" fill="none" stroke="#bcc2cc" stroke-width="1.600"/></svg>
                    <input id="ref" type="text" value="javer4059@gmail.com">
                  </span>
                  <button aria-label="Search"><svg viewBox="0 0 16 16"><circle cx="6.500" cy="6.500" r="5" fill="none" stroke="#e8edf3" stroke-width="2"/><path d="M10 10l5 5" stroke="#e8edf3" stroke-width="2.400"/></svg></button>
                </div>
              </div>
              <div class="card profile">
                <div class="profile-top">
                  <div class="person">
                    <span class="id-badge"><svg viewBox="0 0 30 24"><rect width="30" height="24" rx="3.500" fill="#fff"/><path d="M3 5.500h24V21H3z" fill="#24384f"/><circle cx="10" cy="11" r="3" fill="#fff"/><path d="M5 20c0-4 2-5 5-5s5 1 5 5zM17.500 10H25v2h-7.500zM17.500 15H25v2h-7.500z" fill="#fff"/></svg></span>
                    <div>
                      <b>javer4059@gmail.com</b>
                      <small><svg viewBox="0 0 11 10"><path d="M5.500 0c3 0 4.500 2 5.500 4.500L8 7 5.500 10 4 6.500 0 5.500C1 2 2.500 0 5.500 0z" fill="#b8c3d0"/></svg>ID: PR8X2Y</small>
                    </div>
                  </div>
                  <div class="seen">
                    <span lang="bn">সর্বশেষ ড্যাশবোর্ডে ছিল</span>
                    <time><svg viewBox="0 0 14 14"><circle cx="7" cy="7" r="7" fill="#3ddc7c"/><path d="M7 3.500V7.300L9.600 9" fill="none" stroke="#24364f" stroke-width="1.300"/></svg>2026-03-29 | 02:33</time>
                  </div>
                </div>
                <div class="stats">
                  <div><small lang="bn">বর্তমান ব্যালেন্স</small><span class="money">৳ 1055.0</span></div>
                  <div><small lang="bn">মোট রেফার</small><span class="count">104</span></div>
                  <div><small lang="bn">স্ট্যাটাস</small><span class="unpaid"><svg viewBox="0 0 10 12"><rect y="5" width="10" height="7" rx="1.500" fill="#c21d24"/><path d="M2.500 6V3.500a2.500 2.500 0 0 1 5 0V6" fill="none" stroke="#c21d24" stroke-width="1.500"/></svg>Unpaid</span></div>
                  <div><small lang="bn">একাউন্ট অবস্থা</small><span class="safe">Safe</span></div>
                </div>
              </div>
              <div class="card list">
                <div class="card-head">
                  <svg class="i-tree"><use href="#tree"/></svg>
                  <h2 lang="bn">রেফারকৃত মেম্বার লিস্ট</h2>
                  <span class="total">Total: 104</span>
                </div>
                <div class="table-box">
                  <table><thead><tr><th>User Email</th><th>Balance</th></tr></thead></table>
                </div>
              </div>
              <span class="wa"><svg><use href="#whatsapp"/></svg></span>
              <div class="tabs">
                <svg><use href="#layers"/></svg><svg><use href="#history"/></svg>
                <span class="fab"><svg><use href="#bolt"/></svg></span>
                <svg><use href="#swap"/></svg><svg><use href="#user"/></svg>
              </div>
            </section>

          </div>
          <span class="meta">10:18 AM <svg class="ticks read"><use href="#ticks"/></svg></span>
        </div>
      </div>

      <div class="bubble out"><span class="text">Deksen</span><span class="meta">10:18 AM <svg class="ticks read"><use href="#ticks"/></svg></span></div>
      <div class="bubble out"><span class="text">Vai,&nbsp; real siteo can</span><span class="meta">10:18 AM <svg class="ticks read"><use href="#ticks"/></svg></span></div>
      <div class="bubble out"><span class="text">Abar fcake kajo koren</span><span class="meta">10:19 AM <svg class="ticks read"><use href="#ticks"/></svg></span></div>
      <div class="bubble out"><span class="text">Valo</span><span class="meta">10:19 AM <svg class="ticks read"><use href="#ticks"/></svg></span></div>

      <div class="bubble in first" lang="bn">ওহ ফেক রেফার করলে আমার সমস্যা কি ওর সমস্যা ও টাকা পাবেনা আমার সব রিয়েলল<span class="meta">10:19 AM</span></div>

      <div class="bubble out first"><span class="text">Apnio korsen</span><span class="meta">10:19 AM <svg class="ticks read"><use href="#ticks"/></svg></span></div>

      <div class="bubble in first" lang="bn">দূরো ভাই সাইট রা ফেক ওইটা বলেন কাজ করে টাকা দেন না দারান এটার বেবস্তা করতেছি<span class="meta">10:20 AM</span></div>

      <div class="bubble out first"><span class="text">Ki korben koren</span><span class="meta">10:20 AM <svg class="ticks"><use href="#ticks"/></svg></span></div>

      <div class="bubble in first" lang="bn">পাও সাইট<span class="meta">10:20 AM</span></div>

      <div class="bubble out first"><span class="text">Amra lisenece niye kaj korsi</span><span class="meta">10:20 AM <svg class="ticks"><use href="#ticks"/></svg></span></div>
      <div class="bubble out"><span class="text">Dekhi ki koren</span><span class="meta">10:20 AM <svg class="ticks"><use href="#ticks"/></svg></span></div>
    </main>

    <div class="scrollbar"></div>

    <form class="composer">
      <div class="box">
        <button type="button" class="icon-btn" aria-label="Stickers">
          <svg class="sticker" viewBox="0 0 52 52"><path d="M18 2.500h16c10 0 15.500 6 15.500 15.500v11c0 3-1 5-3 7L37 46c-2 2-4 3.500-7 3.500H18C8 49.500 2.500 44 2.500 34V18C2.500 8 8 2.500 18 2.500z" fill="none" stroke="#8d9598" stroke-width="5"/><circle cx="17" cy="17.500" r="4" fill="#8d9598"/><circle cx="35" cy="17.500" r="4" fill="#8d9598"/><path d="M14 29.500h21c0 6-4 9-9 9s-10-3-12-9z" fill="#8d9598"/><path d="M28.500 50V38c0-6 3-9 9-9H49" fill="none" stroke="#8d9598" stroke-width="4.500"/></svg>
        </button>
        <input type="text" placeholder="Message" aria-label="Message">
        <button type="button" class="icon-btn" aria-label="Attach">
          <svg class="clip" viewBox="0 0 34 52"><path d="M31 11v25c0 18-28 18-28 0V13c0-14 20-14 20 0v22c0 8-12 8-12 0V12" fill="none" stroke="#8d9598" stroke-width="4.400" stroke-linecap="round" transform="translate(-.5 1)"/></svg>
        </button>
        <button type="button" class="icon-btn" aria-label="Camera">
          <svg class="cam" viewBox="0 0 52 48"><path d="M5 9.500h11l4-6.500h12l4 6.500h11q2.500 0 2.500 2.500v30.500q0 2.500-2.500 2.500H5q-2.500 0-2.500-2.500V12Q2.500 9.500 5 9.500z" fill="none" stroke="#8d9598" stroke-width="5"/><circle cx="26" cy="27" r="9.500" fill="none" stroke="#8d9598" stroke-width="5"/></svg>
        </button>
      </div>
      <button type="button" class="mic" aria-label="Voice message">
        <svg viewBox="0 0 36 48"><rect x="10" width="16" height="30" rx="8" fill="#0b1014"/><path d="M2 23.500c1 18 31 18 32 0M18 37v11" fill="none" stroke="#0b1014" stroke-width="4.400"/></svg>
      </button>
    </form>
  </div>

  <div class="nav"><span></span></div>

</body>
</html>
```
FILE: styles.css
```css
* {
  box-sizing: border-box;
}
body {
  margin: 0;
  height: 100vh;
  display: flex;
  flex-direction: column;
  background: #0b1014;
  color: #fafafa;
  font-family: Roboto, "Noto Sans Bengali", sans-serif;
}
button {
  border: 0;
  padding: 0;
  background: none;
  font: inherit;
}
svg {
  display: block;
  flex: none;
}
.defs {
  position: absolute;
  width: 0;
  height: 0;
}

/* header */
.top {
  position: relative;
  height: 248px;
  border-bottom: 2px solid #1a1f23;
  background: #0b1014;
}
.status {
  display: flex;
  justify-content: space-between;
  align-items: center;
  height: 106px;
  padding: 0 77px 0 46px;
}
.clock {
  font-size: 30px;
  font-weight: 500;
}
.status-icons {
  display: flex;
  align-items: center;
  gap: 10px;
}
.mute {
  width: 28px;
  height: 31px;
}
.bars {
  width: 34px;
  height: 28px;
}
.volte {
  display: flex;
  flex-direction: column;
  align-items: center;
  width: 34px;
  height: 34px;
  border: 3px solid #fff;
  border-radius: 5px;
  font-size: 15px;
  font-weight: 700;
  line-height: 14px;
}
.vo {
  font-weight: 500;
}
.net {
  display: flex;
  flex-direction: column;
  align-items: center;
  margin: 0 -6px 0 -5px;
  font-size: 17px;
  font-weight: 700;
  line-height: 16px;
}
.net svg {
  width: 16px;
  height: 12px;
}
.battery {
  position: relative;
  width: 50px;
  height: 26px;
  border: 3px solid #fff;
  border-radius: 7px;
  background: linear-gradient(90deg, #4b4f52 28%, transparent 28%);
  font-size: 20px;
  font-weight: 700;
  line-height: 20px;
  text-align: center;
}
.battery::after {
  content: "";
  position: absolute;
  top: 6px;
  right: -8px;
  width: 4px;
  height: 8px;
  border-radius: 0 4px 4px 0;
  background: #fff;
}
.contact {
  display: flex;
  align-items: center;
  padding: 27px 50px 0 40px;
}
.icon-btn {
  display: flex;
  align-items: center;
  flex: none;
}
.back svg {
  width: 42px;
  height: 40px;
}
.avatar {
  width: 91px;
  height: 91px;
  margin: 0 30px 0 51px;
  border-radius: 50%;
  background: #252344;
  color: #a78bfa;
  font-size: 42px;
  font-weight: 500;
  line-height: 91px;
  text-align: center;
}
.who {
  flex: 1;
}
.who h1 {
  margin: 0;
  font-size: 37px;
  font-weight: 400;
  line-height: 46px;
}
.who p {
  margin: 0;
  font-size: 32px;
  line-height: 43px;
}
.call {
  gap: 29px;
  margin-right: 52px;
}
.phone {
  width: 46px;
  height: 46px;
}
.caret {
  width: 22px;
  height: 14px;
}
.more svg {
  width: 12px;
  height: 42px;
}

/* chat area */
.screen {
  position: relative;
  flex: 1;
  min-height: 0;
  display: flex;
  flex-direction: column;
}
.wallpaper {
  position: absolute;
  width: 100%;
  height: 100%;
}
.ink {
  fill: none;
  stroke: #242a2e;
  stroke-width: 2;
  stroke-linecap: round;
  stroke-linejoin: round;
}
.chat {
  position: relative;
  flex: 1;
  min-height: 0;
  overflow: hidden;
  display: flex;
  flex-direction: column;
  justify-content: flex-end;
  gap: 5px;
  padding: 0 44px 20px;
}
.bubble {
  position: relative;
  flex: none;
  border-radius: 30px;
}
.out {
  align-self: flex-end;
  display: flex;
  align-items: flex-end;
  gap: 22px;
  padding: 16px 23px 11px 24px;
  background: #144d37;
}
.wide {
  width: 682px;
  height: 78px;
  justify-content: flex-end;
}
.text {
  padding-bottom: 10px;
  font-size: 34px;
  line-height: 41px;
}
.meta {
  display: flex;
  align-items: center;
  gap: 8px;
  color: #a1b8af;
  font-family: Roboto, sans-serif;
  font-size: 26px;
  line-height: 30px;
  white-space: nowrap;
}
.ticks {
  width: 42px;
  height: 28px;
}
.read {
  color: #53bdeb;
}
.in {
  display: flow-root;
  align-self: flex-start;
  max-width: 90%;
  padding: 13px 21px 7px 25px;
  background: #1f272a;
  font-size: 34px;
  line-height: 46px;
}
.in .meta {
  float: right;
  margin: 30px 0 0 36px;
  color: #a5a9aa;
}
.first {
  margin-top: 20px;
}
.in.first {
  border-top-left-radius: 0;
}
.out.first {
  border-top-right-radius: 0;
}
.first::after {
  content: "";
  position: absolute;
  top: 0;
  width: 18px;
  height: 26px;
  background: inherit;
}
.in.first::after {
  left: -17px;
  clip-path: polygon(0 8%, 12% 0, 100% 0, 100% 100%);
}
.out.first::after {
  right: -17px;
  clip-path: polygon(0 0, 88% 0, 100% 8%, 0 100%);
}
.media-row {
  flex: none;
  display: flex;
  justify-content: flex-end;
  align-items: center;
  gap: 21px;
  margin-bottom: 1px;
}
.forward {
  display: flex;
  align-items: center;
  justify-content: center;
  width: 81px;
  height: 81px;
  border-radius: 50%;
  background: #0f181de6;
}
.forward svg {
  width: 52px;
  height: 36px;
}
.media {
  width: 776px;
  padding: 10px 9px 21px;
  background: #144d37;
}
.media > .meta {
  justify-content: flex-end;
  margin-top: 15px;
  padding-right: 14px;
}
.scrollbar {
  position: absolute;
  top: 1370px;
  right: 0;
  width: 10px;
  height: 551px;
  background: #54585b;
}

/* the two phone captures */
.shots {
  display: flex;
  gap: 10px;
}
.shot {
  position: relative;
  flex: 1;
  min-width: 0;
  height: 758px;
  overflow: hidden;
  border-radius: 21px;
  background: linear-gradient(90deg, #e9eaec, #f3f6f9 12%, #eff4f9);
  color: #1b2b42;
  font-family: Inter, "Noto Sans Bengali", sans-serif;
}
.browser {
  display: flex;
  align-items: center;
  height: 40px;
  padding: 0 20px 12px 13px;
  background: #10121e;
}
.i-home {
  width: 17px;
  height: 17px;
}
.url {
  display: flex;
  align-items: center;
  width: 201px;
  height: 34px;
  margin: 0 16px 0 12px;
  padding-left: 7px;
  border-radius: 17px;
  background: #343641;
  color: #dcdde4;
  font-family: Roboto, sans-serif;
  font-size: 14px;
}
.url svg {
  width: 14px;
  height: 12px;
  margin-right: 7px;
}
.url em {
  color: #a9abb6;
  font-style: normal;
}
.i-plus {
  width: 14px;
  height: 14px;
}
.tab-count {
  width: 16px;
  height: 16px;
  margin: 0 auto;
  border: 2px solid #dfe1ea;
  border-radius: 4px;
  color: #dfe1ea;
  font-size: 7px;
  font-weight: 700;
  line-height: 12px;
  text-align: center;
}
.i-dots {
  width: 4px;
  height: 14px;
}
.app-bar {
  display: flex;
  align-items: center;
  height: 56px;
  padding: 0 24px;
  border-bottom: 1px solid #e9ecef;
  background: #fcfdfd;
}
.scrolled {
  margin-top: -10px;
}
.i-menu {
  width: 17px;
  height: 14px;
}
.logo {
  display: flex;
  align-items: center;
  justify-content: center;
  width: 28px;
  height: 28px;
  margin: 0 8px 0 auto;
  border-radius: 9px;
  background: #18b98f;
  box-shadow: 0 4px 8px #18b98f55;
}
.logo svg {
  width: 11px;
  height: 13px;
}
.brand {
  margin-right: 62px;
  color: #12162e;
  font-size: 17px;
  font-weight: 800;
}
.brand i {
  color: #25c98a;
  font-style: normal;
}
.dl {
  display: flex;
  align-items: center;
  justify-content: center;
  width: 29px;
  height: 29px;
  margin-right: 18px;
  border: 1px solid #c4f0da;
  border-radius: 50%;
  background: #e6f9f0;
}
.dl svg {
  width: 12px;
  height: 12px;
}
.i-bell {
  width: 14px;
  height: 16px;
}
.card {
  margin: 8px 15px 28px;
  overflow: hidden;
  border-radius: 20px;
  background: #fdfefe;
}
.list {
  padding: 20px 21px;
}
.card-head {
  display: flex;
  align-items: center;
  height: 24px;
  margin-bottom: 17px;
}
.i-tree {
  width: 17px;
  height: 14px;
}
.card-head h2 {
  margin: 0 auto 0 7px;
  font-size: 15px;
  font-weight: 700;
  line-height: 24px;
  white-space: nowrap;
}
.total {
  padding: 0 11px;
  border-radius: 10px;
  background: #eef4fe;
  color: #3868e8;
  font-size: 10px;
  font-weight: 600;
  line-height: 20px;
}
.table-box {
  overflow: hidden;
  border-radius: 7px 0 0;
}
table {
  width: 350px;
  border-collapse: collapse;
  table-layout: fixed;
}
th {
  height: 64px;
  padding: 0 0 0 14px;
  border-bottom: 1px solid #e8eaee;
  background: #f8f9fb;
  color: #59606d;
  font-size: 12px;
  font-weight: 600;
  text-align: left;
}
th:first-child {
  width: 251px;
}
td {
  height: 71px;
  padding: 0 0 0 14px;
  border-bottom: 1px solid #f3f4f6;
  white-space: nowrap;
}
.short td {
  height: 64px;
}
td b {
  display: block;
  font-size: 12px;
  font-weight: 700;
  line-height: 19px;
}
td small {
  display: block;
  color: #b3b8c0;
  font-size: 8px;
  line-height: 16px;
}
td.taka {
  color: #e3307f;
  font-family: "DejaVu Sans Mono", "Noto Sans Bengali", monospace;
  font-size: 12px;
  font-weight: 700;
}
.tabs {
  position: absolute;
  left: 15px;
  right: 15px;
  bottom: 0;
  display: flex;
  align-items: flex-start;
  justify-content: space-between;
  height: 60px;
  padding: 24px 27px 0;
  border-radius: 22px 22px 0 0;
  background: #fcfdfe;
  box-shadow: 0 -6px 16px #0000000c;
}
.shot-list .tabs {
  bottom: -23px;
}
.tabs > svg {
  width: 18px;
  height: 18px;
}
.fab {
  display: flex;
  align-items: center;
  justify-content: center;
  width: 57px;
  height: 57px;
  margin: -41px -10px 0;
  border-radius: 19px;
  background: linear-gradient(135deg, #14b583, #07976c);
  box-shadow: 0 5px 12px #10b98155;
}
.fab svg {
  width: 18px;
  height: 22px;
}
.wa {
  position: absolute;
  right: 17px;
  bottom: 60px;
  z-index: 1;
  display: flex;
  align-items: center;
  justify-content: center;
  width: 45px;
  height: 45px;
  border-radius: 50%;
  background: #25d366;
}
.shot-list .wa {
  bottom: 39px;
}
.wa svg {
  width: 24px;
  height: 24px;
}
.wa::after {
  content: "";
  position: absolute;
  right: -1px;
  bottom: 3px;
  width: 12px;
  height: 12px;
  border: 1px solid #fff;
  border-radius: 50%;
  background: #36d399;
}
.search {
  height: 130px;
  padding: 20px 21px;
  background: radial-gradient(circle at 105% 20%, #f6f9fe 118px, #fdfefe 119px);
}
.search-title {
  display: flex;
  align-items: center;
  gap: 7px;
  height: 28px;
  font-size: 17px;
  font-weight: 700;
}
.search-title svg {
  width: 18px;
  height: 18px;
}
.search-row {
  display: flex;
  gap: 11px;
  margin-top: 12px;
}
.field {
  display: flex;
  align-items: center;
  flex: 1;
  min-width: 0;
  height: 47px;
  padding: 0 10px;
  border: 1px solid #eaecf0;
  border-radius: 9px;
  background: #f8f9fb;
}
.field svg {
  width: 16px;
  height: 13px;
  margin-right: 9px;
}
.field input {
  min-width: 0;
  flex: 1;
  border: 0;
  padding: 0;
  background: none;
  color: #3a4453;
  font-family: Inter, sans-serif;
  font-size: 14px;
}
.search-row button {
  display: flex;
  align-items: center;
  justify-content: center;
  flex: none;
  width: 71px;
  height: 47px;
  border-radius: 10px;
  background: #0a2540;
  box-shadow: 0 4px 8px #0a254022;
}
.search-row button svg {
  width: 16px;
  height: 16px;
}
.profile {
  box-shadow: 0 4px 8px #0000001c;
}
.profile-top {
  display: flex;
  flex-direction: column;
  align-items: center;
  height: 148px;
  padding-top: 18px;
  background: #0a2540;
  color: #fff;
}
.person {
  display: flex;
  align-items: center;
  gap: 14px;
}
.person b {
  display: block;
  font-size: 16px;
  font-weight: 600;
  line-height: 20px;
}
.person small {
  display: flex;
  align-items: center;
  gap: 4px;
  color: #b8c3d0;
  font-family: "DejaVu Sans Mono", monospace;
  font-size: 10px;
  line-height: 16px;
}
.person small svg {
  width: 11px;
  height: 10px;
}
.id-badge {
  display: flex;
  align-items: center;
  justify-content: center;
  width: 49px;
  height: 49px;
  border: 1px solid #4a5c72;
  border-radius: 50%;
  background: #24384f;
}
.id-badge svg {
  width: 30px;
  height: 24px;
}
.seen {
  margin-top: 15px;
  padding: 5px 14px;
  border-radius: 9px;
  background: #24364f;
  text-align: right;
}
.seen span {
  display: block;
  color: #b9c2ce;
  font-size: 9px;
  line-height: 17px;
}
.seen time {
  display: flex;
  align-items: center;
  gap: 6px;
  color: #3ddc7c;
  font-family: "DejaVu Sans Mono", monospace;
  font-size: 12px;
  font-weight: 700;
  line-height: 21px;
}
.seen svg {
  width: 14px;
  height: 14px;
}
.stats {
  display: grid;
  grid-template-columns: 9fr 7fr;
  row-gap: 22px;
  padding: 20px 20px 19px 0;
}
.stats div {
  display: flex;
  flex-direction: column;
  align-items: center;
  height: 45px;
}
.stats div:nth-child(even) {
  border-left: 1px solid #f1f3f5;
}
.stats small {
  color: #737a87;
  font-size: 10px;
  line-height: 16px;
}
.money {
  color: #e5197a;
  font-family: "DejaVu Sans Mono", "Noto Sans Bengali", monospace;
  font-size: 21px;
  line-height: 32px;
}
.count {
  color: #1a5cf0;
  font-size: 21px;
  font-weight: 700;
  line-height: 32px;
}
.unpaid {
  display: flex;
  align-items: center;
  gap: 2px;
  height: 20px;
  margin-top: 5px;
  padding: 0 10px;
  border-radius: 10px;
  background: #fde0e0;
  color: #c21d24;
  font-size: 11px;
  font-weight: 600;
}
.unpaid svg {
  width: 10px;
  height: 12px;
}
.safe {
  color: #22a854;
  font-size: 12px;
  font-weight: 600;
  line-height: 28px;
}
.profile + .list {
  margin-top: 0;
}

/* message box */
.composer {
  position: relative;
  display: flex;
  align-items: center;
  gap: 12px;
  padding: 0 11px 11px 12px;
}
.box {
  flex: 1;
  min-width: 0;
  display: flex;
  align-items: center;
  height: 119px;
  padding: 0 32px 0 34px;
  border-radius: 60px;
  background: #1f272a;
}
.sticker {
  width: 52px;
  height: 52px;
}
.clip {
  width: 34px;
  height: 52px;
  margin-right: 80px;
}
.cam {
  width: 52px;
  height: 48px;
}
/* green strip is the text cursor */
.box input {
  flex: 1;
  min-width: 0;
  height: 53px;
  margin-left: 34px;
  border: 0;
  padding: 0;
  outline: 0;
  background: linear-gradient(#21c063, #21c063) left / 5px 100% no-repeat;
  color: #fafafa;
  font-family: Roboto, sans-serif;
  font-size: 39px;
}
.box input::placeholder {
  color: #8d9598;
  opacity: 1;
}
.mic {
  display: flex;
  align-items: center;
  justify-content: center;
  width: 122px;
  height: 122px;
  border-radius: 50%;
  background: #21c063;
}
.mic svg {
  width: 36px;
  height: 48px;
}

/* gesture bar */
.nav {
  display: flex;
  justify-content: center;
  align-items: center;
  height: 61px;
  background: #000;
}
.nav span {
  width: 275px;
  height: 10px;
  border-radius: 5px;
  background: #ebebeb;
}
```
